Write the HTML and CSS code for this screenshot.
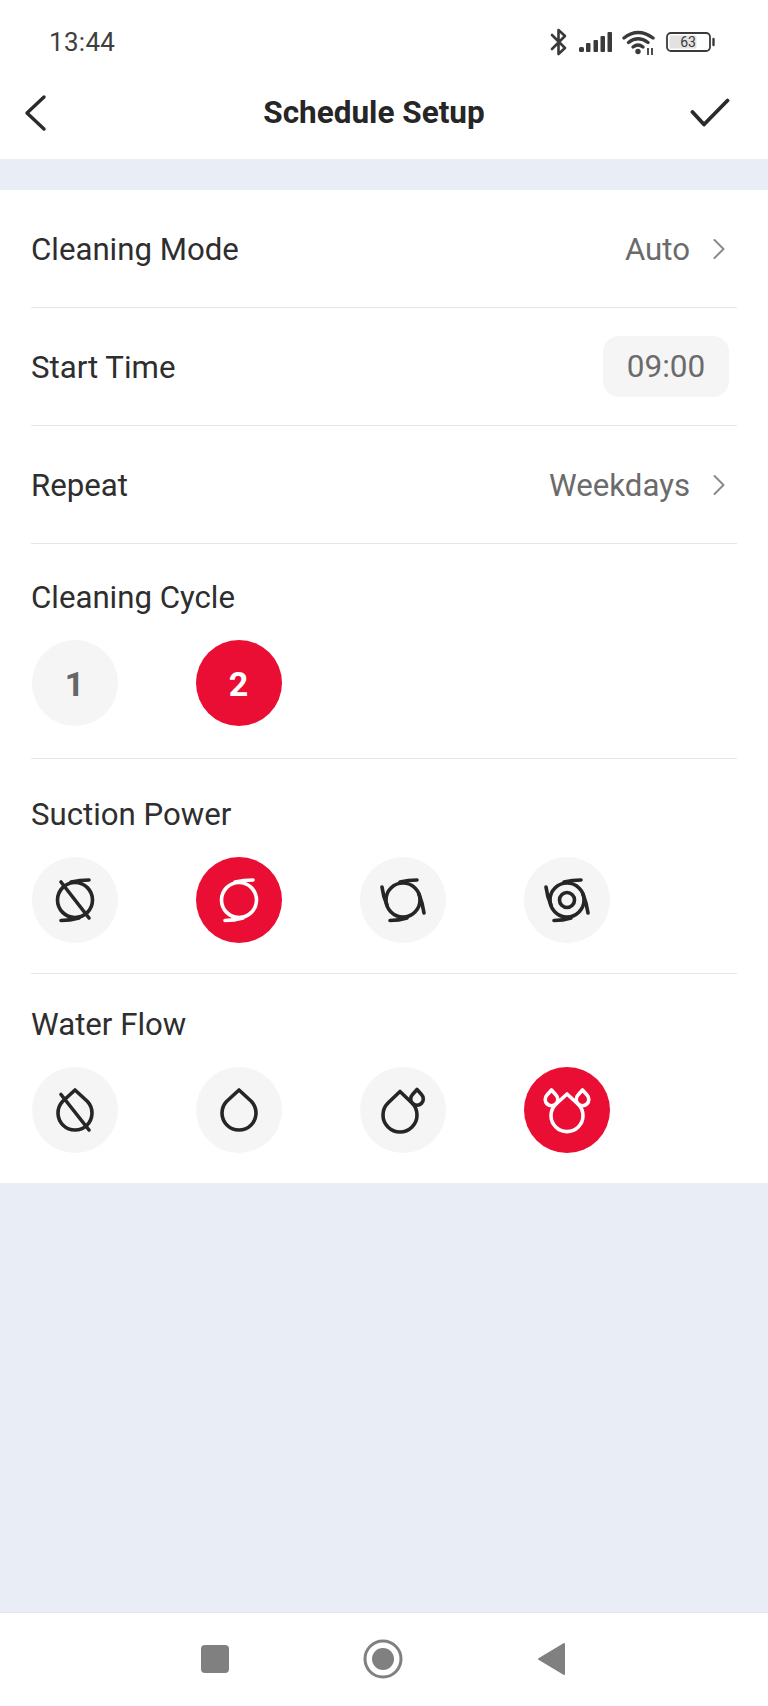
FILE: index.html
```html
<!DOCTYPE html>
<html lang="en">
<head>
<meta charset="utf-8">
<title>Schedule Setup</title>
<link rel="stylesheet" href="styles.css">
</head>
<body>
<div class="app">
  <div class="status">
    <span class="clock">13:44</span>
    <div class="status-icons">
      <svg class="i-bt" viewBox="0 0 20 30"><path d="M3 8 L16 21 L9.5 27 V3 L16 9 L3 22" fill="none" stroke="#3a3a3a" stroke-width="2.6" stroke-linecap="round" stroke-linejoin="round"/></svg>
      <svg class="i-sig" viewBox="0 0 34 22"><g fill="#3a3a3a"><rect x="0" y="16" width="5" height="5" rx="1.5"/><rect x="7" y="12" width="4.500" height="9" rx="1"/><rect x="14.500" y="9" width="4.500" height="12" rx="1"/><rect x="21.500" y="5" width="4.500" height="16" rx="1"/><rect x="28.500" y="1" width="4.500" height="20" rx="1"/></g></svg>
      <svg class="i-wifi" viewBox="0 0 34 26"><g fill="none" stroke="#3a3a3a" stroke-width="3.400" stroke-linecap="round"><path d="M2 9 Q16 -2 31 9"/><path d="M6.500 13.500 Q16 6 26 13.500"/><path d="M11 18 Q16 14 21 18"/></g><circle cx="16" cy="22.500" r="2.700" fill="#3a3a3a"/><g stroke="#3a3a3a" stroke-width="1.800"><path d="M26 19 V26"/><path d="M30 19 V26"/></g></svg>
      <svg class="i-bat" viewBox="0 0 50 20"><rect x="1" y="1" width="43" height="18" rx="4" fill="#fff" stroke="#3a3a3a" stroke-width="1.800"/><rect x="3.500" y="3.500" width="27" height="13" rx="1.500" fill="#e2e2e2"/><path d="M47.500 7 V13" stroke="#3a3a3a" stroke-width="2.400" stroke-linecap="round"/><text x="22" y="15" text-anchor="middle" class="bat-text">63</text></svg>
    </div>
  </div>
  <header class="topbar">
    <svg class="i-back" viewBox="0 0 24 38"><path d="M21 3 L4 19 L21 35" fill="none" stroke="#2b2b2b" stroke-width="3.400" stroke-linecap="round" stroke-linejoin="round"/></svg>
    <h1 class="title">Schedule Setup</h1>
    <svg class="i-check" viewBox="0 0 40 30"><path d="M2.500 14 L14 26.500 L37.500 2.500" fill="none" stroke="#2b2b2b" stroke-width="3.800" stroke-linecap="round" stroke-linejoin="round"/></svg>
  </header>
  <div class="band"></div>
  <main class="card">
    <div class="row">
      <span class="label">Cleaning Mode</span>
      <span class="value">Auto<svg class="i-chev" viewBox="0 0 14 22"><path d="M2.500 2 L11.500 11 L2.500 20" fill="none" stroke="#8a8a8a" stroke-width="2" stroke-linecap="round" stroke-linejoin="round"/></svg></span>
    </div>
    <div class="row">
      <span class="label">Start Time</span>
      <span class="time">09:00</span>
    </div>
    <div class="row">
      <span class="label">Repeat</span>
      <span class="value">Weekdays<svg class="i-chev" viewBox="0 0 14 22"><path d="M2.500 2 L11.500 11 L2.500 20" fill="none" stroke="#8a8a8a" stroke-width="2" stroke-linecap="round" stroke-linejoin="round"/></svg></span>
    </div>
    <section class="group group-cycle">
      <div class="label group-label">Cleaning Cycle</div>
      <div class="options">
        <div class="opt num">1</div>
        <div class="opt num on">2</div>
      </div>
    </section>
    <section class="group group-suction">
      <div class="label group-label">Suction Power</div>
      <div class="options">
        <div class="opt"><svg class="glyph" viewBox="-43 -43 86 86"><circle r="17.500"/><path d="M-4 -18 Q5 -20 14 -20"/><path d="M-14 20.500 Q-5 20.500 4 18"/><path d="M-14 -18 L14 18"/></svg></div>
        <div class="opt on"><svg class="glyph" viewBox="-43 -43 86 86"><circle r="17.500"/><path d="M-4 -18 Q5 -20 14 -20"/><path d="M-14 20.500 Q-5 20.500 4 18"/></svg></div>
        <div class="opt"><svg class="glyph" viewBox="-43 -43 86 86"><circle r="17"/><path d="M-3 -18 Q5 -20 14 -20"/><path d="M16 -6 Q19.500 3 21 13"/><path d="M-13 20.500 Q-4 20.500 4 18"/><path d="M-21 -13 Q-20 -4 -16 5"/></svg></div>
        <div class="opt"><svg class="glyph" viewBox="-43 -43 86 86"><circle r="17"/><circle r="7.500"/><path d="M-3 -18 Q5 -20 14 -20"/><path d="M16 -6 Q19.500 3 21 13"/><path d="M-13 20.500 Q-4 20.500 4 18"/><path d="M-21 -13 Q-20 -4 -16 5"/></svg></div>
      </div>
    </section>
    <section class="group group-water">
      <div class="label group-label">Water Flow</div>
      <div class="options">
        <div class="opt"><svg class="glyph" viewBox="-43 -43 86 86"><path d="M0 -20 L12.500 -8.500 A17 17 0 1 1 -12.500 -8.500 Z"/><path d="M-14 -15.500 L14 20"/></svg></div>
        <div class="opt"><svg class="glyph" viewBox="-43 -43 86 86"><path d="M0 -20 L12.500 -8.500 A17 17 0 1 1 -12.500 -8.500 Z"/></svg></div>
        <div class="opt"><svg class="glyph" viewBox="-43 -43 86 86"><path d="M-3 -18.500 L9 -7 A17 17 0 1 1 -15 -7 Z"/><path class="over" d="M14 -20.500 L18.500 -15.500 A6.300 6.300 0 1 1 9.500 -15.500 Z"/></svg></div>
        <div class="opt on"><svg class="glyph" viewBox="-43 -43 86 86"><path d="M0 -16 L11.500 -5.500 A16 16 0 1 1 -11.500 -5.500 Z"/><path class="over" d="M-15.500 -20 L-11 -15 A6.300 6.300 0 1 1 -20 -15 Z"/><path class="over" d="M15.500 -20 L20 -15 A6.300 6.300 0 1 1 11 -15 Z"/></svg></div>
      </div>
    </section>
  </main>
  <div class="spacer"></div>
  <nav class="navbar">
    <svg class="nav-i" viewBox="0 0 44 44"><rect x="8" y="8" width="28" height="28" rx="4" fill="#808080"/></svg>
    <svg class="nav-i" viewBox="0 0 44 44"><circle cx="22" cy="22" r="18" fill="none" stroke="#808080" stroke-width="3"/><circle cx="22" cy="22" r="11" fill="#808080"/></svg>
    <svg class="nav-i" viewBox="0 0 44 44"><path d="M35 7 V37 L10 22 Z" fill="#808080" stroke="#808080" stroke-width="2" stroke-linejoin="round"/></svg>
  </nav>
</div>
</body>
</html>
```
FILE: styles.css
```css
* { box-sizing: border-box; }
html, body { margin: 0; padding: 0; }
body { font-family: Roboto, "Liberation Sans", sans-serif; background: #e9edf6; }
.app { width: 768px; height: 1706px; display: flex; flex-direction: column; background: #e9edf6; overflow: hidden; }

.status { height: 84px; background: #fff; display: flex; align-items: center; justify-content: space-between; padding: 0 52px 0 49px; }
.clock { font-size: 26px; color: #3f3f3f; letter-spacing: 0.3px; }
.status-icons { display: flex; align-items: center; }
.i-bt { width: 20px; height: 30px; margin-right: 10px; }
.i-sig { width: 34px; height: 22px; margin-right: 9px; }
.i-wifi { width: 34px; height: 26px; margin-right: 10px; }
.i-bat { width: 50px; height: 20px; }
.bat-text { font-size: 14px; fill: #3a3a3a; font-family: Roboto, sans-serif; }

.topbar { height: 75px; background: #fff; display: flex; align-items: center; justify-content: space-between; padding: 0 38px 17px 23px; }
.i-back { width: 24px; height: 38px; }
.i-check { width: 40px; height: 30px; }
.title { margin: 0 0 0 11px; font-size: 31.500px; font-weight: 700; color: #262626; line-height: 40px; }

.band { height: 31px; }
.card { background: #fff; padding: 0 31px; }
.row { height: 118px; padding-top: 2px; border-bottom: 1px solid #e6e6e6; display: flex; align-items: center; justify-content: space-between; }
.label { font-size: 31.200px; color: #2e2e2e; line-height: 40px; }
.value { display: flex; align-items: center; font-size: 31.200px; color: #6b6b6b; margin-right: 11px; }
.i-chev { width: 14px; height: 22px; margin-left: 22px; margin-top: -2px; }
.time { width: 126px; height: 61px; margin-right: 8px; margin-top: -2px; border-radius: 16px; background: #f5f5f5; display: flex; align-items: center; justify-content: center; font-size: 31.500px; color: #6b6b6b; }

.group { border-bottom: 1px solid #e6e6e6; }
.group:last-child { border-bottom: 0; padding-bottom: 30px; }
.group-cycle { padding-top: 34px; padding-bottom: 32px; }
.group-suction { padding-top: 36px; padding-bottom: 30px; }
.group-water { padding-top: 31px; }
.group-label { margin-bottom: 22px; }
.options { display: flex; gap: 78px; padding-left: 1px; }
.opt { width: 86px; height: 86px; border-radius: 50%; background: #f5f5f5; display: flex; align-items: center; justify-content: center; color: #262626; }
.opt.on { background: #eb0e34; color: #fff; }
.num { font-size: 34px; font-weight: 700; color: #666; padding: 2px 1px 0 0; }
.num.on { color: #fff; }
.glyph { width: 86px; height: 86px; fill: none; stroke: currentColor; stroke-width: 3.600; stroke-linecap: round; stroke-linejoin: round; }
.glyph .over { fill: #f5f5f5; }
.opt.on .glyph .over { fill: #eb0e34; }

.spacer { flex: 1; }
.navbar { height: 94px; background: #fff; border-top: 1px solid #e4e6ea; display: flex; justify-content: center; align-items: center; gap: 124px; padding-bottom: 1px; padding-right: 2px; }
.nav-i { width: 44px; height: 44px; }
```
